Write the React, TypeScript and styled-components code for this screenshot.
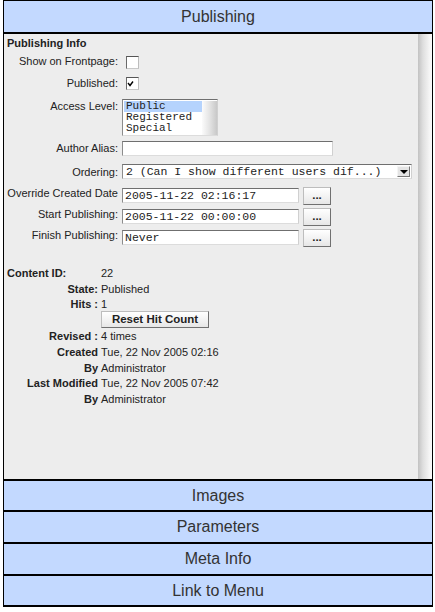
import React from 'react';
import styled, { createGlobalStyle } from 'styled-components';

const GlobalStyle = createGlobalStyle`
  body {
    margin: 0;
    background: #fff;
    font-family: "Liberation Sans", Arial, Helvetica, sans-serif;
    color: #222;
  }
`;

const Accordion = styled.div`
  width: 430px;
  margin-left: 3px;
  box-sizing: border-box;
  border-left: 1px solid #000;
  border-right: 1px solid #000;
`;

const Toggler = styled.div<{ $open?: boolean; $last?: boolean; $h: number }>`
  height: ${(p) => p.$h}px;
  background: #c3d9ff;
  color: #333;
  font-size: 16px;
  display: flex;
  align-items: center;
  justify-content: center;
  border-top: ${(p) => (p.$open ? '1px' : '2px')} solid #000;
  border-bottom: ${(p) => (p.$open || p.$last ? '2px solid #000' : 'none')};
`;

const Pane = styled.div`
  height: 445px;
  background: #ededed;
  display: flex;
`;

const PaneBody = styled.div`
  flex: 1;
  padding: 2px 0 0 3px;
  font-size: 11px;
`;

const ScrollTrack = styled.div`
  width: 14px;
  background: linear-gradient(to right, #c2c2c2, #dedede 35%, #f4f4f4 80%, #fafafa);
`;

const SectionTitle = styled.div`
  font-weight: bold;
  line-height: 14px;
`;

const FormRow = styled.div<{ $h: number; $top?: boolean }>`
  display: grid;
  grid-template-columns: 111px 1fr;
  column-gap: 4px;
  height: ${(p) => p.$h}px;
  align-items: ${(p) => (p.$top ? 'start' : 'center')};
`;

const Label = styled.label<{ $lift?: number; $pad?: number }>`
  text-align: right;
  line-height: 14px;
  white-space: nowrap;
  padding-top: ${(p) => p.$pad ?? 0}px;
  margin-bottom: ${(p) => p.$lift ?? 0}px;
`;

const Field = styled.div<{ $pad?: number }>`
  display: flex;
  align-items: center;
  gap: 4px;
  padding-top: ${(p) => p.$pad ?? 0}px;
`;

const CheckBox = styled.span<{ $shift?: number }>`
  display: block;
  width: 11px;
  height: 11px;
  margin-left: 4px;
  margin-top: ${(p) => p.$shift ?? 0}px;
  background: #fff;
  border: 1px solid #8a8a8a;
  border-top-color: #555;
  border-left-color: #6a6a6a;
  border-bottom-color: #c8c8c8;
  border-right-color: #bdbdbd;
  position: relative;

  svg {
    position: absolute;
    left: 0;
    top: 0;
  }
`;

const Inset = `
  box-sizing: border-box;
  background: #fff;
  border: 1px solid #bbb;
  border-top-color: #6f6f6f;
  border-left-color: #8c8c8c;
  border-bottom-color: #dcdcdc;
  border-right-color: #d0d0d0;
  font-family: "Liberation Mono", "Courier New", monospace;
  font-size: 11.5px;
  color: #222;
`;

const ListBox = styled.div`
  ${Inset}
  width: 96px;
  height: 37px;
  display: flex;
  padding: 1px 0 0 1px;
  font-size: 11px;
`;

const ListItems = styled.div`
  flex: 1;
`;

const ListItem = styled.div<{ $selected?: boolean }>`
  line-height: 11px;
  height: 11px;
  padding-left: 2px;
  background: ${(p) => (p.$selected ? '#b5d3fd' : 'transparent')};
`;

const ListTrack = styled.div`
  width: 15px;
  background: linear-gradient(to right, #fbfbfb, #e4e4e4 50%, #c8c8c8);
`;

const TextBox = styled.div<{ $w: number }>`
  ${Inset}
  width: ${(p) => p.$w}px;
  height: 15px;
  line-height: 13px;
  padding-left: 2px;
  white-space: nowrap;
  overflow: hidden;
`;

const SelectBox = styled.div`
  ${Inset}
  width: 290px;
  height: 15px;
  display: flex;
  align-items: center;
  padding-left: 3px;
  white-space: nowrap;
`;

const SelectText = styled.span`
  flex: 1;
  line-height: 13px;
`;

const SelectArrow = styled.span`
  width: 13px;
  height: 11px;
  margin-right: 1px;
  box-sizing: border-box;
  background: #e4e4e4;
  border: 1px solid #f4f4f4;
  border-right-color: #777;
  border-bottom-color: #777;
  display: flex;
  align-items: center;
  justify-content: center;

  &::after {
    content: '';
    border-left: 4px solid transparent;
    border-right: 4px solid transparent;
    border-top: 4px solid #000;
  }
`;

const PushButton = styled.button<{ $w: number; $h: number }>`
  box-sizing: border-box;
  width: ${(p) => p.$w}px;
  height: ${(p) => p.$h}px;
  margin: 0;
  padding: 0;
  font-family: "Liberation Sans", Arial, sans-serif;
  font-weight: bold;
  font-size: 11.5px;
  color: #222;
  background: linear-gradient(to bottom, #ffffff, #f1f1f1 60%, #e6e6e6);
  border: 1px solid #bdbdbd;
  border-right-color: #707070;
  border-bottom-color: #707070;
  border-radius: 0;
  line-height: 1;
`;

const InfoTable = styled.div`
  margin-top: 17px;
  display: grid;
  grid-template-columns: 91px 1fr;
  grid-template-rows: 16px 16px 14px 17px 16px 16px 15px 16px 16px;
  column-gap: 3px;
  align-items: center;
`;

const InfoLabel = styled.div<{ $left?: boolean }>`
  font-weight: bold;
  text-align: ${(p) => (p.$left ? 'left' : 'right')};
  white-space: nowrap;
  line-height: 14px;
`;

const InfoValue = styled.div`
  white-space: nowrap;
  line-height: 14px;
`;

const Check = () => (
  <svg width="11" height="11" viewBox="0 0 11 11">
    <polyline points="1,5 3,7.5 6,3.5" fill="none" stroke="#000" strokeWidth="1.4" />
  </svg>
);

const dateRows = [
  { label: 'Override Created Date', value: '2005-11-22 02:16:17' },
  { label: 'Start Publishing:', value: '2005-11-22 00:00:00' },
  { label: 'Finish Publishing:', value: 'Never' },
];

const info: { label: string; value?: string; left?: boolean; button?: boolean }[] = [
  { label: 'Content ID:', value: '22', left: true },
  { label: 'State:', value: 'Published' },
  { label: 'Hits :', value: '1' },
  { label: '', button: true },
  { label: 'Revised :', value: '4 times' },
  { label: 'Created', value: 'Tue, 22 Nov 2005 02:16' },
  { label: 'By', value: 'Administrator' },
  { label: 'Last Modified', value: 'Tue, 22 Nov 2005 07:42' },
  { label: 'By', value: 'Administrator' },
];

const tabs = [
  { title: 'Images', h: 29 },
  { title: 'Parameters', h: 30 },
  { title: 'Meta Info', h: 30 },
  { title: 'Link to Menu', h: 29 },
];

export default function App() {
  return (
    <>
      <GlobalStyle />
      <Accordion>
        <Toggler $open $h={31}>Publishing</Toggler>
        <Pane>
          <PaneBody>
            <SectionTitle>Publishing Info</SectionTitle>

            <FormRow $h={21}>
              <Label>Show on Frontpage:</Label>
              <Field>
                <CheckBox $shift={3} />
              </Field>
            </FormRow>

            <FormRow $h={24}>
              <Label>Published:</Label>
              <Field>
                <CheckBox $shift={1}>
                  <Check />
                </CheckBox>
              </Field>
            </FormRow>

            <FormRow $h={44} $top>
              <Label $pad={4}>Access Level:</Label>
              <Field $pad={4}>
                <ListBox>
                  <ListItems>
                    <ListItem $selected>Public</ListItem>
                    <ListItem>Registered</ListItem>
                    <ListItem>Special</ListItem>
                  </ListItems>
                  <ListTrack />
                </ListBox>
              </Field>
            </FormRow>

            <FormRow $h={19}>
              <Label $lift={2}>Author Alias:</Label>
              <Field>
                <TextBox $w={211} />
              </Field>
            </FormRow>

            <FormRow $h={27}>
              <Label>Ordering:</Label>
              <Field>
                <SelectBox>
                  <SelectText>2 (Can I show different users dif...)</SelectText>
                  <SelectArrow />
                </SelectBox>
              </Field>
            </FormRow>

            {dateRows.map((row) => (
              <FormRow $h={21} key={row.label}>
                <Label $lift={5}>{row.label}</Label>
                <Field>
                  <TextBox $w={177}>{row.value}</TextBox>
                  <PushButton $w={28} $h={18}>...</PushButton>
                </Field>
              </FormRow>
            ))}

            <InfoTable>
              {info.map((row, i) => (
                <React.Fragment key={i}>
                  <InfoLabel $left={row.left}>{row.label}</InfoLabel>
                  {row.button ? (
                    <div>
                      <PushButton $w={108} $h={17}>Reset Hit Count</PushButton>
                    </div>
                  ) : (
                    <InfoValue>{row.value}</InfoValue>
                  )}
                </React.Fragment>
              ))}
            </InfoTable>
          </PaneBody>
          <ScrollTrack />
        </Pane>
        {tabs.map((t, i) => (
          <Toggler key={t.title} $h={t.h} $last={i === tabs.length - 1}>
            {t.title}
          </Toggler>
        ))}
      </Accordion>
    </>
  );
}
